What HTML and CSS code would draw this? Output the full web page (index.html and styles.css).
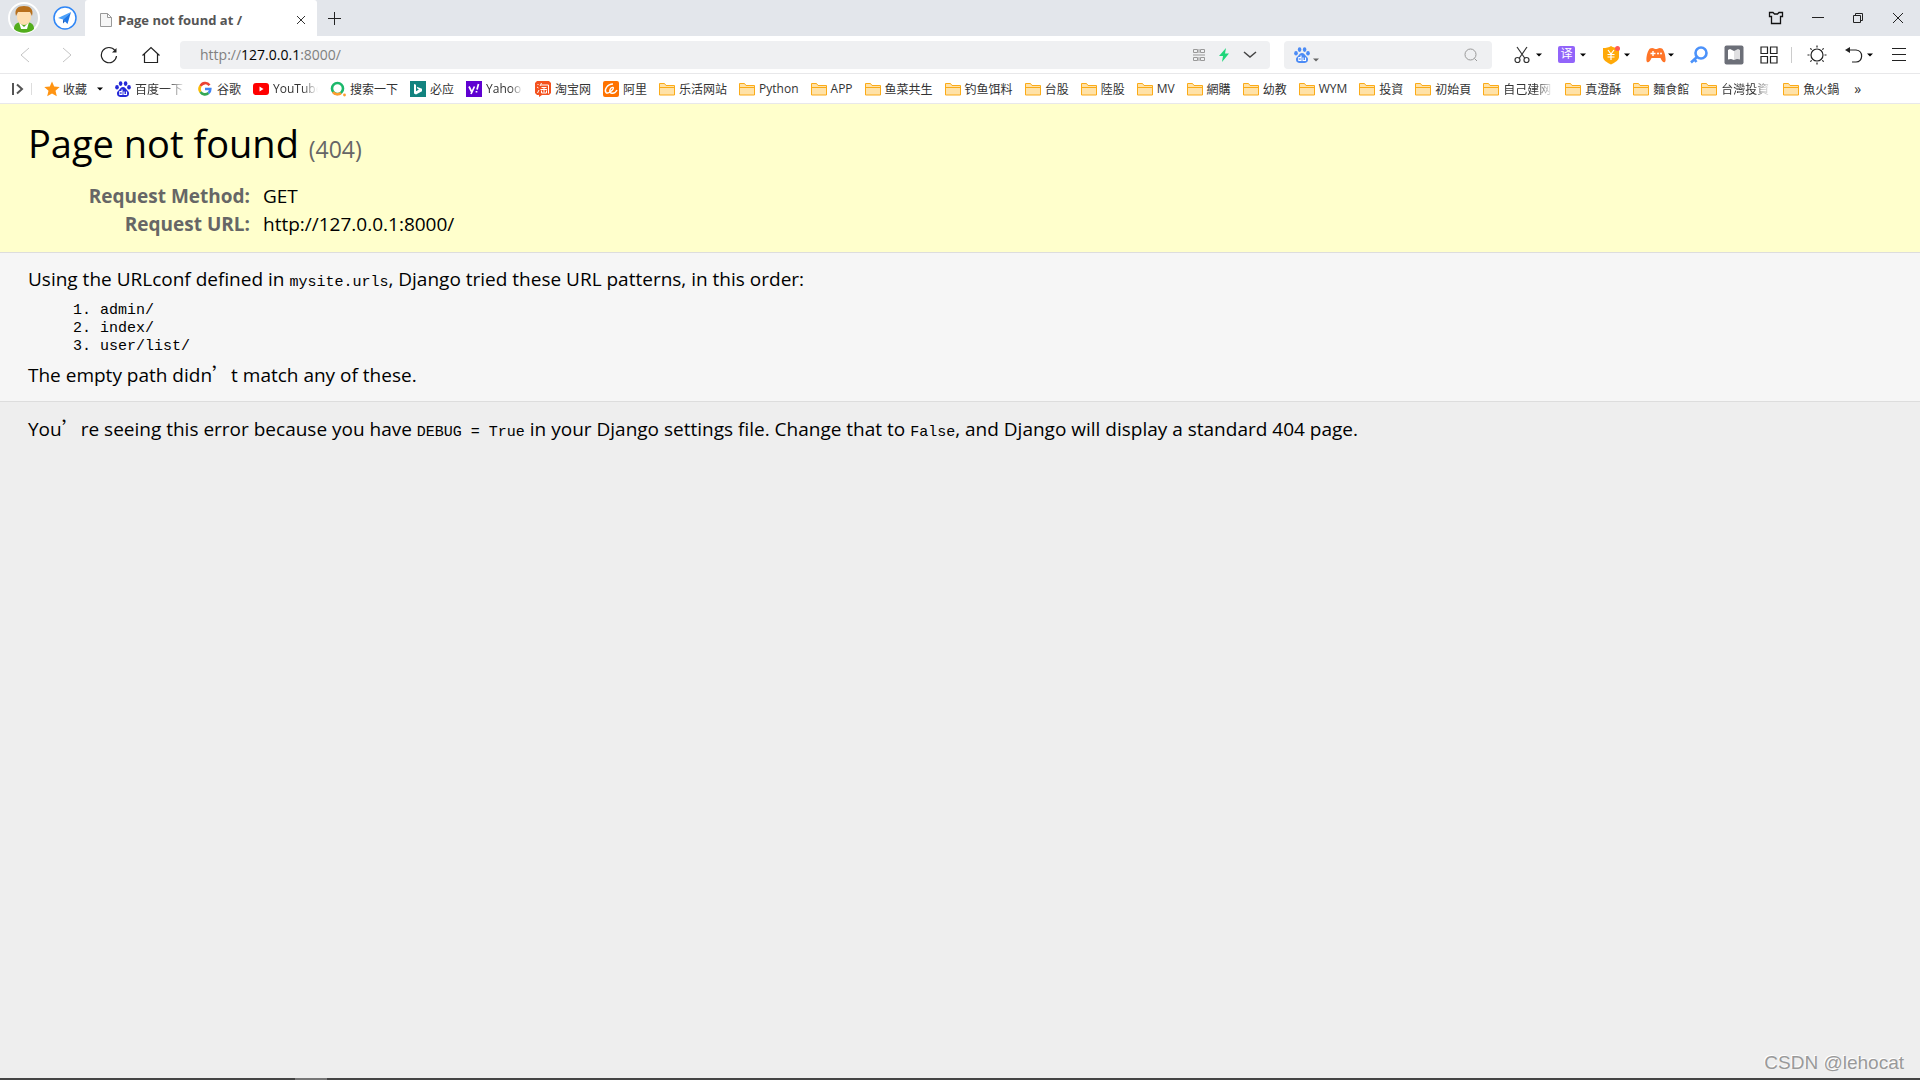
FILE: index.html
```html
<!DOCTYPE html>
<html lang="zh">
<head>
  <meta charset="UTF-8" />
  <meta name="viewport" content="width=device-width, initial-scale=1.0"/>
  <title>Page not found at /</title>
  <link rel="stylesheet" href="styles.css">
</head>
<body>

<!-- shared icons -->
<svg class="defs" aria-hidden="true">
  <symbol id="folder" viewBox="0 0 16 16">
    <path d="M.5 2.500h5l1.500 2h8.500v9.500H.5z" fill="#ffe2a8" stroke="#fbab18"/>
    <path d="M.5 6.500h15" stroke="#fbab18"/>
  </symbol>
  <symbol id="paw" viewBox="0 0 16 16">
    <ellipse cx="5.600" cy="2.600" rx="1.800" ry="2.400"/>
    <ellipse cx="10.600" cy="2.600" rx="1.800" ry="2.400"/>
    <ellipse cx="2" cy="6.300" rx="1.800" ry="2.300"/>
    <ellipse cx="14" cy="6.300" rx="1.800" ry="2.300"/>
    <path d="M8 6c2 0 2.700 1.700 4 3s2.300 2 2 4c-.3 2.300-2 3-3.500 3h-5C4 16 2.300 15.300 2 13c-.3-2 .7-2.700 2-4s2-3 4-3z"/>
    <path d="M7 8.500v5H4.800v-3H7M9 10.500v3h2.500v-3" fill="none" stroke="#fff" stroke-width="1.100"/>
  </symbol>
  <symbol id="caret" viewBox="0 0 6 4"><path d="M0 .5h6L3 3.500z"/></symbol>
</svg>

<header class="browser">
  <div class="tab-bar">
    <button class="round-btn" aria-label="Account">
      <svg width="32" height="32" viewBox="0 0 32 32">
        <circle cx="16" cy="16" r="15" fill="#d5dade" stroke="#fff" stroke-width="2"/>
        <path d="M6 27c0-5 3-6 6-7h8c3 1 6 2 6 7-5 5-15 5-20 0z" fill="#52ad1d"/>
        <path d="M11 20l5 5 5-5-2 7h-6z" fill="#fff"/>
        <ellipse cx="16" cy="15" rx="7" ry="8" fill="#ffdfb0"/>
        <path d="M8 14C6 7 10 4 16 4s10 3 8 10l-2-4c-4 0-8 0-12 0z" fill="#b8701c"/>
      </svg>
    </button>
    <button class="round-btn" aria-label="Send">
      <svg width="24" height="24" viewBox="0 0 24 24">
        <circle cx="12" cy="12" r="11" fill="#fff" stroke="#2f86f6" stroke-width="1.500"/>
        <path d="M18 6L5 12l5 1.500z" fill="#4aa0fa"/>
        <path d="M18 6l-8 7.500 4.500 4.500z" fill="#1f78e8"/>
        <path d="M10 13.500v4l2-2z" fill="#1a5fc0"/>
      </svg>
    </button>
    <div class="tab">
      <svg width="12" height="14" viewBox="0 0 12 14" fill="#f6f6f6" stroke="#999"><path d="M.5.500h7l4 4v9H.5zM7.500.500v4h4"/></svg>
      <span class="tab-title">Page not found at /</span>
      <button aria-label="Close tab">
        <svg width="10" height="10" viewBox="0 0 10 10" fill="none" stroke="#333"><path d="M1 1l8 8M9 1L1 9"/></svg>
      </button>
    </div>
    <button class="new-tab" aria-label="New tab">
      <svg width="14" height="14" viewBox="0 0 14 14" fill="none" stroke="#222"><path d="M7.500 1v13M1 7.500h13"/></svg>
    </button>
    <div class="window-controls">
      <button aria-label="Skin">
        <svg width="16" height="14" viewBox="0 0 16 14" fill="none" stroke="#111" stroke-width="1.300"><path d="M1.500 1.500h3.500l1.500 1.500h3l1.500-1.500h3.500v4h-2v7h-9v-7h-2z"/></svg>
      </button>
      <button aria-label="Minimize">
        <svg width="12" height="12" viewBox="0 0 12 12" stroke="#222"><path d="M0 5.500h12"/></svg>
      </button>
      <button aria-label="Restore">
        <svg width="12" height="12" viewBox="0 0 12 12" fill="none" stroke="#222"><path d="M1.500 3.500h7v7h-7zM3.500 3.500v-2h7v7h-2"/></svg>
      </button>
      <button aria-label="Close">
        <svg width="12" height="12" viewBox="0 0 12 12" fill="none" stroke="#222"><path d="M1 1l10 10M11 1L1 11"/></svg>
      </button>
    </div>
  </div>

  <div class="nav-bar">
    <div class="nav-buttons">
      <button aria-label="Back">
        <svg width="18" height="18" viewBox="0 0 18 18" fill="none" stroke="#c4c4c4"><path d="M13 2L5 9l8 7"/></svg>
      </button>
      <button aria-label="Forward">
        <svg width="18" height="18" viewBox="0 0 18 18" fill="none" stroke="#c4c4c4"><path d="M5 2l8 7-8 7"/></svg>
      </button>
      <button aria-label="Reload">
        <svg width="18" height="18" viewBox="0 0 18 18" fill="none" stroke="#222" stroke-width="1.200"><path d="M16.500 10A7.600 7.600 0 1 1 15 4.500"/><path d="M16.500 2v4.500H12z" fill="#222" stroke="none"/></svg>
      </button>
      <button aria-label="Home">
        <svg width="18" height="18" viewBox="0 0 18 18" fill="none" stroke="#222" stroke-width="1.200"><path d="M.5 9.500L9 1.500l8.500 8M2.500 8v8.500h13V8"/></svg>
      </button>
    </div>

    <div class="address">
      <div class="url" role="textbox" contenteditable="true" spellcheck="false" aria-label="Address">http://<b>127.0.0.1</b>:8000/</div>
      <button aria-label="QR code">
        <svg width="12" height="12" viewBox="0 0 12 12" fill="none" stroke="#999"><path d="M.5.500h4v3h-4zM7.500.500h4v3h-4zM.5 8.500h4v3h-4zM7.500 8.500h4v3h-4zM0 6h12M6 0v4M6 8v4"/></svg>
      </button>
      <button aria-label="Speed mode">
        <svg width="12" height="14" viewBox="0 0 12 14" fill="#1fd67a"><path d="M8 0L1 8h4l-1 6 7-8.500H7z"/></svg>
      </button>
      <button aria-label="History">
        <svg width="14" height="12" viewBox="0 0 14 12" fill="none" stroke="#444" stroke-width="1.500"><path d="M1 3l6 5 6-5"/></svg>
      </button>
    </div>

    <div class="search">
      <button class="engine" aria-label="Search engine">
        <svg width="16" height="16" fill="#4c8bf5"><use href="#paw"/></svg>
        <svg class="caret" width="6" height="4" fill="#666"><use href="#caret"/></svg>
      </button>
      <input type="text" aria-label="Search">
      <button aria-label="Search">
        <svg width="14" height="14" viewBox="0 0 14 14" fill="none" stroke="#999"><circle cx="6.500" cy="6.500" r="5.500"/><path d="M10.500 10.500l2.500 2.500"/></svg>
      </button>
    </div>

    <div class="tools">
      <button class="tool-menu" aria-label="Screenshot">
        <svg width="16" height="18" viewBox="0 0 16 18" fill="none" stroke="#333" stroke-width="1.200"><path d="M3 1l8 11.500M13 1L5 12.500"/><circle cx="3.500" cy="14" r="2.500"/><circle cx="12.500" cy="14" r="2.500"/></svg>
        <svg width="6" height="4"><use href="#caret"/></svg>
      </button>
      <button class="tool-menu" aria-label="Translate">
        <span class="translate">译</span>
        <svg width="6" height="4"><use href="#caret"/></svg>
      </button>
      <button class="tool-menu" aria-label="Shopping">
        <svg width="18" height="20" viewBox="0 0 18 20"><path d="M9 1c2 1.500 5 2 8 2v9c0 3-4 5.500-8 7.500C5 17.500 1 15 1 12V3c3 0 6-.5 8-2z" fill="#ffa908"/><path d="M6 5l3 4 3-4M5.500 9.500h7M5.500 12h7M9 9v6" fill="none" stroke="#fff" stroke-width="1.200"/><circle cx="15.500" cy="3.500" r="2.500" fill="#ff5a55"/></svg>
        <svg width="6" height="4"><use href="#caret"/></svg>
      </button>
      <button class="tool-menu" aria-label="Games">
        <svg width="20" height="16" viewBox="0 0 20 16"><path d="M4 1.500C7 0 8 2 10 2s3-2 6-.5c2.500 2 4 9 3.500 12.500-1 3-4 0-5-3h-9c-1 3-4 6-5 3C0 10.500 1.500 3.500 4 1.500z" fill="#ff7528"/><path d="M4.500 6.500h5M7 4v5" stroke="#fff" stroke-width="1.400"/><circle cx="12" cy="6.500" r="1" fill="#fff"/><circle cx="15" cy="6.500" r="1" fill="#fff"/></svg>
        <svg width="6" height="4"><use href="#caret"/></svg>
      </button>
      <button aria-label="Find">
        <svg width="18" height="18" viewBox="0 0 18 18" fill="none" stroke="#4c92fa" stroke-width="2.600"><circle cx="11" cy="7" r="5.500"/><path d="M7 11l-6 5.500M4 13l2.500 3"/></svg>
      </button>
      <button aria-label="Reader">
        <svg width="20" height="20" viewBox="0 0 20 20"><rect x=".5" y=".5" width="19" height="19" rx="2" fill="#6c6f78"/><path d="M4 5l2-1 4 2v9l-3-1-3 .5z" fill="#fff"/><path d="M16 5l-2-1-4 2v9l3-1 3 .5z" fill="#e0e0e2"/></svg>
      </button>
      <button aria-label="Apps">
        <svg width="18" height="18" viewBox="0 0 18 18" fill="none" stroke="#222" stroke-width="1.200"><path d="M1 1h6.500v6.500H1zM10.500 1H17v6.500h-6.500zM1 10.500h6.500V17H1zM10.500 10.500H17V17h-6.500z"/></svg>
      </button>
      <span class="divider"></span>
      <button class="sun" aria-label="Night mode">
        <svg width="20" height="20" viewBox="0 0 20 20" fill="none" stroke="#222" stroke-width="1.200"><circle cx="10" cy="10" r="6"/><path d="M10 .5v2M10 17.500v2M.5 10h2M17.500 10h2M3.300 3.300l1.400 1.400M15.300 15.300l1.400 1.400M3.300 16.700l1.400-1.400M15.300 4.700l1.400-1.400"/></svg>
      </button>
      <button class="tool-menu" aria-label="Undo">
        <svg width="18" height="16" viewBox="0 0 18 16" fill="none" stroke="#222" stroke-width="1.200"><path d="M3 3h8c8 1 7 12 0 12H7"/><path d="M0 3l5-3v6z" fill="#222" stroke="none"/></svg>
        <svg width="6" height="4"><use href="#caret"/></svg>
      </button>
      <button class="menu" aria-label="Menu">
        <svg width="14" height="14" viewBox="0 0 14 14" stroke="#222"><path d="M0 .5h14M0 6.500h14M0 12.500h14"/></svg>
      </button>
    </div>
  </div>

  <nav class="bookmarks">
    <button class="expand" aria-label="Show sidebar">
      <svg width="12" height="12" viewBox="0 0 12 12" fill="none" stroke="#555" stroke-width="2"><path d="M1 0v12M5 1.500L10 6l-5 4.500"/></svg>
    </button>
    <button class="favorites">
      <svg width="16" height="16" viewBox="0 0 16 16" fill="#ff9412"><path d="M8 .5l2.200 5 5.500.5-4.200 3.700 1.300 5.500L8 12.400l-4.800 2.800 1.300-5.500L.3 6l5.500-.5z"/></svg>
      收藏
      <svg class="caret" width="6" height="4"><use href="#caret"/></svg>
    </button>
    <a href="#"><svg fill="#2529d8"><use href="#paw"/></svg><span class="fade">百度一下</span></a>
    <a href="#"><svg viewBox="0 0 16 16" fill="none" stroke-width="2.600"><path d="M12.500 4.200A5.300 5.300 0 0 0 3.500 5" stroke="#ea4335"/><path d="M3.500 5a5.300 5.300 0 0 0 0 6" stroke="#fbbc05"/><path d="M3.500 11a5.300 5.300 0 0 0 8 1" stroke="#34a853"/><path d="M11.500 12c1.300-1 1.800-2.500 1.800-4H8" stroke="#4285f4"/></svg><span>谷歌</span></a>
    <a href="#"><svg viewBox="0 0 16 16"><rect y="2" width="16" height="12" rx="3" fill="#f00"/><path d="M6.500 5.500l4 2.500-4 2.500z" fill="#fff"/></svg><span class="fade latin">YouTube</span></a>
    <a href="#"><svg viewBox="0 0 16 16"><circle cx="7.500" cy="7.500" r="5.500" fill="none" stroke="#1bb86b" stroke-width="2.600"/><path d="M3 11a5.500 5.500 0 0 0 8 1" fill="none" stroke="#ff9d2e" stroke-width="2.600"/><circle cx="14.500" cy="14" r="1.400" fill="#ff9d2e"/></svg><span>搜索一下</span></a>
    <a href="#"><svg viewBox="0 0 16 16"><path d="M0 0h16v16H0z" fill="#12837f"/><path d="M4 3l2 .7v6.500l3-1.700-1.500-.8L6.700 5.800 12 7.700v2.500L6 13.500l-2-1z" fill="#fff"/></svg><span>必应</span></a>
    <a href="#"><svg viewBox="0 0 16 16"><path d="M0 0h16v16H0z" fill="#5f01d1"/><path d="M3 5.500l2.500 5M8.500 5.500L5 13M12.500 3l-1.500 5.500M10.500 10v1.500" fill="none" stroke="#fff" stroke-width="1.700"/></svg><span class="fade yahoo">Yahoo</span></a>
    <a href="#"><svg viewBox="0 0 16 16"><path d="M2 0h12l2 2v10l-2 2H7l-3 2v-2H2l-2-2V2z" fill="#f4511e"/><path d="M2.500 3l1 1M2 6l1.500 1M2.500 12l1.500-3M6.500 2L5 5M6 4h7.500v8.500M6.500 6.500h5M5.500 8.500h6.500M9 6.500v5M6.500 9.500v2.500h5V9.500" fill="none" stroke="#fff"/></svg><span>淘宝网</span></a>
    <a href="#"><svg viewBox="0 0 16 16"><rect width="16" height="16" rx="2" fill="#ff7300"/><path d="M10 3C4 3 1 9 3 11.500s9-4 7-5S5 11 8 12s5-1 6-3" fill="none" stroke="#fff" stroke-width="1.400"/></svg><span>阿里</span></a>
    <a href="#"><svg><use href="#folder"/></svg><span>乐活网站</span></a>
    <a href="#"><svg><use href="#folder"/></svg><span>Python</span></a>
    <a href="#"><svg><use href="#folder"/></svg><span>APP</span></a>
    <a href="#"><svg><use href="#folder"/></svg><span>鱼菜共生</span></a>
    <a href="#"><svg><use href="#folder"/></svg><span>钓鱼饵料</span></a>
    <a href="#"><svg><use href="#folder"/></svg><span>台股</span></a>
    <a href="#"><svg><use href="#folder"/></svg><span>陸股</span></a>
    <a href="#"><svg><use href="#folder"/></svg><span>MV</span></a>
    <a href="#"><svg><use href="#folder"/></svg><span>網購</span></a>
    <a href="#"><svg><use href="#folder"/></svg><span>幼教</span></a>
    <a href="#"><svg><use href="#folder"/></svg><span>WYM</span></a>
    <a href="#"><svg><use href="#folder"/></svg><span>投資</span></a>
    <a href="#"><svg><use href="#folder"/></svg><span>初始頁</span></a>
    <a href="#"><svg><use href="#folder"/></svg><span class="fade">自己建网</span></a>
    <a href="#"><svg><use href="#folder"/></svg><span>真澄酥</span></a>
    <a href="#"><svg><use href="#folder"/></svg><span>麵食館</span></a>
    <a href="#"><svg><use href="#folder"/></svg><span class="fade">台灣投資</span></a>
    <a href="#"><svg><use href="#folder"/></svg><span>魚火鍋</span></a>
    <button class="more" aria-label="More bookmarks">»</button>
  </nav>
</header>

<main>
  <section id="summary">
    <h1>Page not found <span>(404)</span></h1>
    <table class="meta">
      <tr>
        <th scope="row">Request Method:</th>
        <td>GET</td>
      </tr>
      <tr>
        <th scope="row">Request URL:</th>
        <td>http://127.0.0.1:8000/</td>
      </tr>
    </table>
  </section>

  <section id="info">
    <p>Using the URLconf defined in <code>mysite.urls</code>, Django tried these URL patterns, in this order:</p>
    <ol>
      <li>admin/</li>
      <li>index/</li>
      <li>user/list/</li>
    </ol>
    <p>The empty path didn<span class="quote">’</span>t match any of these.</p>
  </section>

  <section id="explanation">
    <p>You<span class="quote">’</span>re seeing this error because you have <code>DEBUG = True</code> in your Django settings file. Change that to <code>False</code>, and Django will display a standard 404 page.</p>
  </section>
</main>

<div class="watermark">CSDN @lehocat</div>
<footer class="taskbar"><span class="task"></span></footer>

</body>
</html>
```

FILE: styles.css
```css
* { box-sizing: border-box; }

body {
  margin: 0;
  min-height: 100vh;
  display: flex;
  flex-direction: column;
  position: relative;
  background: #eee;
  color: #000;
  font-family: "Open Sans", "Noto Sans CJK SC", sans-serif;
  font-size: 19px;
}

button {
  display: flex;
  align-items: center;
  justify-content: center;
  padding: 0;
  border: 0;
  background: none;
  color: inherit;
  font: inherit;
}

svg {
  display: block;
  flex: none;
}

.defs {
  position: absolute;
  width: 0;
  height: 0;
}

/* browser chrome */
.browser {
  background: #fff;
  font-size: 12px;
  color: #333;
}

.tab-bar {
  display: flex;
  align-items: center;
  height: 36px;
  padding-left: 8px;
  background: #e3e6eb;
}

.round-btn { margin-right: 13px; }
.round-btn + .round-btn { margin-right: 8px; }

.tab {
  display: flex;
  align-items: center;
  gap: 6px;
  width: 232px;
  height: 36px;
  padding: 4px 11px 0 15px;
  background: #fff;
  border-radius: 3px 3px 0 0;
}

.tab-title {
  flex: 1;
  font-size: 13px;
  font-weight: bold;
  color: #555;
}

.new-tab { margin-left: 10px; }

.window-controls {
  display: flex;
  gap: 28px;
  margin-left: auto;
  padding-right: 16px;
}

.nav-bar {
  display: flex;
  align-items: center;
  height: 38px;
  padding: 0 12px 0 15px;
  border-bottom: 1px solid #e8e8ea;
}

.nav-buttons {
  display: flex;
  gap: 24px;
  width: 165px;
  padding-left: 1px;
}

.address,
.search {
  display: flex;
  align-items: center;
  height: 28px;
  background: #eff0f2;
  border-radius: 4px;
}

.address {
  flex: 1;
  gap: 13px;
  padding: 0 13px 0 20px;
}

.url {
  flex: 1;
  font-size: 14px;
  color: #808080;
  outline: 0;
}

.url b {
  font-weight: normal;
  color: #000;
}

.search {
  width: 208px;
  margin: 0 22px 0 14px;
  padding: 0 14px 0 10px;
}

.search input {
  flex: 1;
  min-width: 0;
  border: 0;
  outline: 0;
  background: none;
}

.engine { gap: 3px; }
.engine .caret { margin-top: 10px; }

.tools {
  display: flex;
  align-items: center;
  gap: 16px;
}

.tool-menu {
  width: 28px;
  justify-content: space-between;
}

.translate {
  width: 17px;
  height: 17px;
  border-radius: 2px;
  background: #9264fa;
  color: #fff;
  font-size: 12px;
  line-height: 16px;
}

.divider {
  width: 1px;
  height: 16px;
  margin: 0 -3px;
  background: #ccc;
}

.sun { width: 24px; }
.menu { width: 19px; }

.bookmarks {
  display: flex;
  align-items: center;
  gap: 12px;
  height: 30px;
  padding-left: 12px;
  border-bottom: 1px solid #e8e8ea;
  white-space: nowrap;
}

.bookmarks a {
  display: flex;
  align-items: center;
  gap: 4px;
  color: #333;
  text-decoration: none;
}

.bookmarks a svg {
  width: 16px;
  height: 16px;
}

.expand {
  width: 20px;
  height: 12px;
  justify-content: flex-start;
  border-right: 1px solid #ddd;
}

.favorites { gap: 3px; }
.favorites .caret { margin-left: 7px; }

.fade {
  width: 50px;
  overflow: hidden;
  -webkit-mask-image: linear-gradient(to right, #000 65%, transparent);
  mask-image: linear-gradient(to right, #000 65%, transparent);
}

.latin { width: 45px; }
.yahoo { width: 37px; }

.more {
  margin-left: 3px;
  font-size: 14px;
}

/* error page */
main { flex: 1; }

section {
  padding: 12px 28px;
}

p, h1, ol { margin: 0; }

#summary {
  padding-bottom: 14px;
  background: #ffc;
  border-bottom: 1px solid #ddd;
}

h1 {
  font-size: 38px;
  font-weight: normal;
  line-height: 54px;
  margin-bottom: 6px;
}

h1 span {
  font-size: 23px;
  color: #666;
}

.meta {
  border-collapse: collapse;
  line-height: 24px;
}

.meta th,
.meta td {
  padding: 2px 0;
}

.meta th {
  width: 222px;
  text-align: right;
  color: #666;
}

.meta td { padding-left: 13px; }

#info {
  background: #f6f6f6;
  border-bottom: 1px solid #ddd;
}

#info p,
#explanation p {
  line-height: 28px;
}

code,
ol {
  font-family: "Liberation Mono", monospace;
  font-size: 15px;
}

ol {
  margin: 5px 0 4px;
  padding-left: 72px;
  line-height: 18px;
}

.quote { font-family: "Noto Sans CJK SC", sans-serif; }

.watermark {
  position: absolute;
  right: 16px;
  bottom: 6px;
  font-family: "Liberation Sans", sans-serif;
  font-size: 19px;
  color: #999;
  text-shadow: -1px -1px 0 #fff;
}

.taskbar {
  display: flex;
  height: 2px;
  padding-left: 295px;
  background: #444;
}

.task {
  width: 32px;
  background: #777;
}
```
